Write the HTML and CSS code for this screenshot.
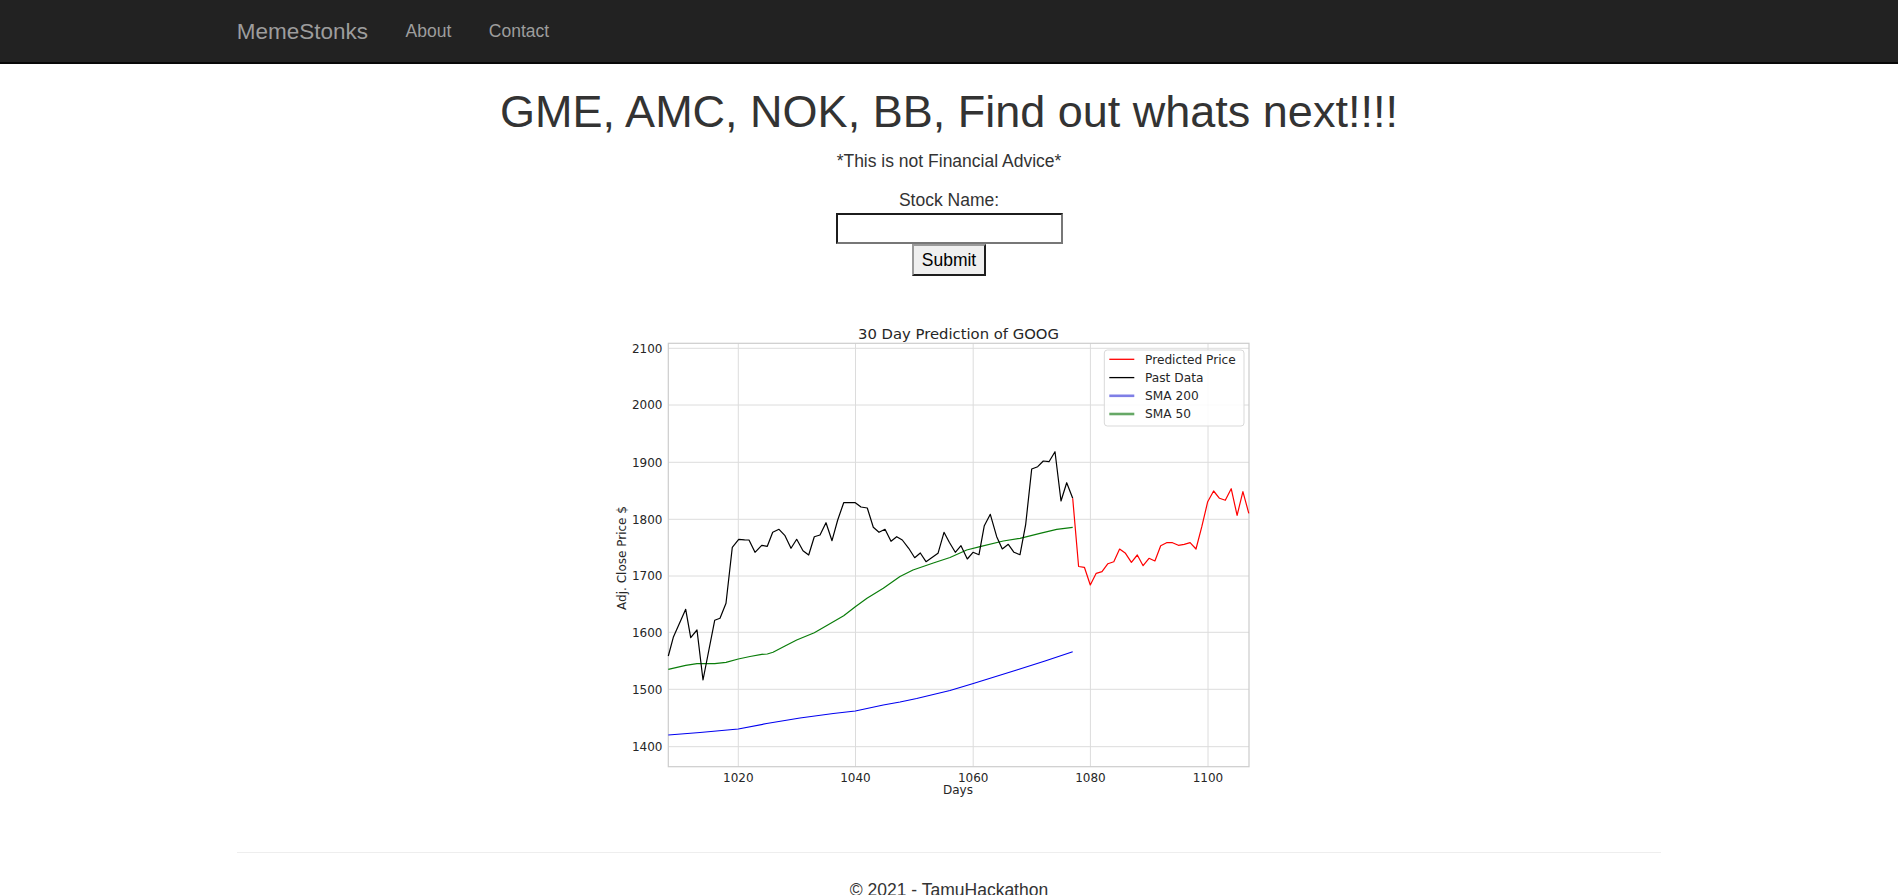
FILE: index.html
```html
<!DOCTYPE html>
<html lang="en">
<head>
<meta charset="utf-8">
<title>MemeStonks</title>
<link rel="stylesheet" href="styles.css">
</head>
<body>
<nav class="navbar">
  <div class="nav-inner">
    <a class="brand" href="#">MemeStonks</a>
    <ul class="nav-links">
      <li><a href="#">About</a></li>
      <li><a href="#">Contact</a></li>
    </ul>
  </div>
</nav>
<main class="page">
  <h1 class="headline">GME, AMC, NOK, BB, Find out whats next!!!!</h1>
  <p class="disclaimer">*This is not Financial Advice*</p>
  <form class="stock-form">
    <label class="stock-label" for="stock">Stock Name:</label>
    <input class="stock-input" id="stock" type="text">
    <button class="stock-submit" type="submit">Submit</button>
  </form>
  <div class="chart-wrap">
    <svg class="chart" width="698" height="527" viewBox="600 300 698 527" xmlns="http://www.w3.org/2000/svg">
      <g class="grid">
        <line x1="668.3" y1="348.3" x2="1249" y2="348.3"/>
        <line x1="668.3" y1="405" x2="1249" y2="405"/>
        <line x1="668.3" y1="462.3" x2="1249" y2="462.3"/>
        <line x1="668.3" y1="519.3" x2="1249" y2="519.3"/>
        <line x1="668.3" y1="576" x2="1249" y2="576"/>
        <line x1="668.3" y1="632.3" x2="1249" y2="632.3"/>
        <line x1="668.3" y1="689.3" x2="1249" y2="689.3"/>
        <line x1="668.3" y1="746.7" x2="1249" y2="746.7"/>
        <line x1="738.3" y1="343.3" x2="738.3" y2="766.7"/>
        <line x1="855.5" y1="343.3" x2="855.5" y2="766.7"/>
        <line x1="973.2" y1="343.3" x2="973.2" y2="766.7"/>
        <line x1="1090.4" y1="343.3" x2="1090.4" y2="766.7"/>
        <line x1="1208" y1="343.3" x2="1208" y2="766.7"/>
      </g>
      <rect class="frame" x="668.3" y="343.3" width="580.7" height="423.4"/>
      <polyline class="ln-blue" points="668.3,735 700,732.5 738.3,729 766.7,723.5 800,718 833.3,713.5 855.3,711 883.3,705 900,702 916.7,698.5 933.3,694.5 950,690.5 973.3,683.5 1016.7,670 1045,661 1072.7,651.7"/>
      <polyline class="ln-green" points="668.3,669.3 685.7,665.3 697,663.7 714.7,663.7 726,662.3 738.3,659 750,656.5 761.7,654.3 767.3,654 773,652.3 785,646 796.7,640 814.3,632.7 826,626 843.7,615.7 855.3,606.7 867,598.3 883.3,588.3 900,576.5 913,570 933.3,563 950,557.5 966.7,550 980,546.7 1003.3,541 1020,538.3 1040,533.3 1056.7,529.3 1072.7,527.3"/>
      <polyline class="ln-black" points="668.3,656 673.3,637.3 685.7,609.3 690.7,637.7 697,630 703,680 714.7,620.3 720,618.3 726,603.3 732.3,547.3 738.7,539.3 744.6,539.8 749,540 755,552.3 761.7,545.3 767.3,546.3 772.7,532.3 779,529.3 785,535.7 791,548.3 796.7,539.3 803,550.7 808.7,555 814.3,536.7 820,535 826,522.7 832,540.7 837.7,520 843.7,502.7 849.5,502.7 855.3,502.7 861,507 867.3,508 873.3,527.3 879,532.3 885,529.3 891,541.3 896.7,536.7 902.3,540 908.7,548.3 914.7,557.7 920.3,553 926,561.7 932,557.5 938,553.3 944,532.3 949.3,542.3 955.3,552.3 961,545.7 967.3,559 973,552.3 979,554.7 984.3,525.7 990.3,514.3 996.7,536.7 1002.3,549 1008.3,544.3 1014,552.3 1020,554.7 1025.7,524.3 1031.7,469 1037.7,466.7 1043.3,461 1049,461.7 1055,451.7 1061,501 1066.7,482.7 1072.7,498.3"/>
      <polyline class="ln-red" points="1072.7,498.3 1078.6,566.5 1084.4,567.3 1090.3,585 1096.2,573.3 1102,571.7 1107.9,563.7 1113.8,561.7 1119.6,549 1125.5,553.3 1131.4,562.3 1137.3,555 1143.1,565.7 1149,558.3 1154.9,561 1160.7,545.7 1166.6,542.7 1172.5,542.7 1178.4,545.3 1184.2,544.3 1190.1,542.7 1196,549 1201.8,526.7 1207.7,501.7 1213.6,491 1219.5,498.3 1225.3,500.3 1231.2,488.7 1237.1,515.3 1242.9,491.7 1248.8,513.3"/>
      <g class="ticks ticks-y">
        <text x="662.5" y="352.7">2100</text>
        <text x="662.5" y="409.4">2000</text>
        <text x="662.5" y="466.7">1900</text>
        <text x="662.5" y="523.7">1800</text>
        <text x="662.5" y="580.4">1700</text>
        <text x="662.5" y="636.7">1600</text>
        <text x="662.5" y="693.7">1500</text>
        <text x="662.5" y="751.1">1400</text>
      </g>
      <g class="ticks ticks-x">
        <text x="738.3" y="781.7">1020</text>
        <text x="855.5" y="781.7">1040</text>
        <text x="973.2" y="781.7">1060</text>
        <text x="1090.4" y="781.7">1080</text>
        <text x="1208" y="781.7">1100</text>
      </g>
      <text class="axis-label" x="958" y="793.5">Days</text>
      <text class="axis-label" x="625.5" y="558" transform="rotate(-90 625.5 558)">Adj. Close Price $</text>
      <text class="chart-title" x="958.5" y="339">30 Day Prediction of GOOG</text>
      <g class="legend">
        <rect class="legend-box" x="1104.3" y="350" width="139.7" height="76" rx="3"/>
        <line class="lg-red" x1="1109.3" y1="359.3" x2="1134.3" y2="359.3"/>
        <line class="lg-black" x1="1109.3" y1="377.6" x2="1134.3" y2="377.6"/>
        <line class="lg-blue" x1="1109.3" y1="395.8" x2="1134.3" y2="395.8"/>
        <line class="lg-green" x1="1109.3" y1="414" x2="1134.3" y2="414"/>
        <text x="1145" y="363.7">Predicted Price</text>
        <text x="1145" y="382">Past Data</text>
        <text x="1145" y="400.2">SMA 200</text>
        <text x="1145" y="418.4">SMA 50</text>
      </g>
    </svg>
  </div>
  <hr class="divider">
  <footer class="footer">
    <p>&copy; 2021 - TamuHackathon</p>
  </footer>
</main>
</body>
</html>
```

FILE: styles.css
```css
html {
  overflow: hidden;
}

body {
  margin: 0;
  font-family: "Liberation Sans", Arial, sans-serif;
  font-size: 17.5px;
  line-height: 25px;
  color: #333;
  background: #fff;
}

.navbar {
  background: #222;
  border-bottom: 2px solid #080808;
  height: 62px;
}

.nav-inner {
  width: 1462px;
  height: 62px;
  margin: 0 auto;
  padding: 0 18.75px;
  box-sizing: border-box;
  display: flex;
  align-items: center;
}

.brand {
  font-size: 22.5px;
  line-height: 25px;
  color: #9d9d9d;
  text-decoration: none;
  padding: 18.75px 18.75px 18.75px 0;
}

.nav-links {
  list-style: none;
  margin: 0;
  padding: 0;
  display: flex;
}

.nav-links a {
  display: block;
  padding: 18.75px;
  font-size: 17.5px;
  line-height: 25px;
  color: #9d9d9d;
  text-decoration: none;
}

.page {
  width: 1462px;
  margin: 0 auto;
  padding: 0 18.75px;
  box-sizing: border-box;
  text-align: center;
}

.headline {
  font-size: 45px;
  line-height: 1.1;
  font-weight: normal;
  color: #333;
  margin: 23px 0 12.5px;
}

.disclaimer {
  margin: 0 0 13px;
}

.stock-form {
  display: flex;
  flex-direction: column;
  align-items: center;
  margin: 0;
}

.stock-label {
  display: block;
  line-height: 26px;
}

.stock-input {
  display: block;
  width: 227px;
  height: 31px;
  box-sizing: border-box;
  margin: 0;
  padding: 1px 3px;
  border: 2px solid;
  border-color: #1c1c1c #777 #777 #1c1c1c;
  background: #fff;
  font-family: "Liberation Sans", Arial, sans-serif;
  font-size: 17.5px;
}

.stock-submit {
  display: block;
  width: 74px;
  height: 32px;
  box-sizing: border-box;
  margin: 0;
  padding: 0;
  border: 2px solid;
  border-color: #9a9a9a #1e1e1e #1e1e1e #9a9a9a;
  background: #efefef;
  color: #000;
  font-family: "Liberation Sans", Arial, sans-serif;
  font-size: 17.5px;
}

.chart-wrap {
  margin-top: 24px;
}

.chart {
  display: block;
  margin: 0 auto;
  font-family: "DejaVu Sans", sans-serif;
}

.grid line {
  stroke: #dcdcdc;
  stroke-width: 1;
}

.frame {
  fill: none;
  stroke: #cccccc;
  stroke-width: 1.2;
}

.ln-black, .ln-red, .ln-green, .ln-blue {
  fill: none;
  stroke-width: 1.2;
  stroke-linejoin: round;
}

.ln-black { stroke: #000; }
.ln-red { stroke: #ff0000; }
.ln-green { stroke: #0a7d0a; }
.ln-blue { stroke: #0000f0; }

.ticks text {
  font-size: 12px;
  fill: #262626;
}

.ticks-y text {
  text-anchor: end;
}

.ticks-x text {
  text-anchor: middle;
}

.axis-label {
  font-size: 12px;
  fill: #262626;
  text-anchor: middle;
}

.chart-title {
  font-size: 14.8px;
  fill: #262626;
  text-anchor: middle;
}

.legend-box {
  fill: #fff;
  fill-opacity: 0.85;
  stroke: #d9d9d9;
  stroke-width: 1;
}

.legend line {
  stroke-width: 1.3;
}

.lg-red { stroke: #ff0000; }
.lg-black { stroke: #000; }
.legend .lg-blue { stroke: #7f7fe6; stroke-width: 2.6; }
.legend .lg-green { stroke: #66a866; stroke-width: 2.6; }

.legend text {
  font-size: 12.2px;
  fill: #262626;
}

.divider {
  margin: 25px 0;
  border: 0;
  border-top: 1.25px solid #eee;
}

.footer p {
  margin: 0 0 12.5px;
}
```
